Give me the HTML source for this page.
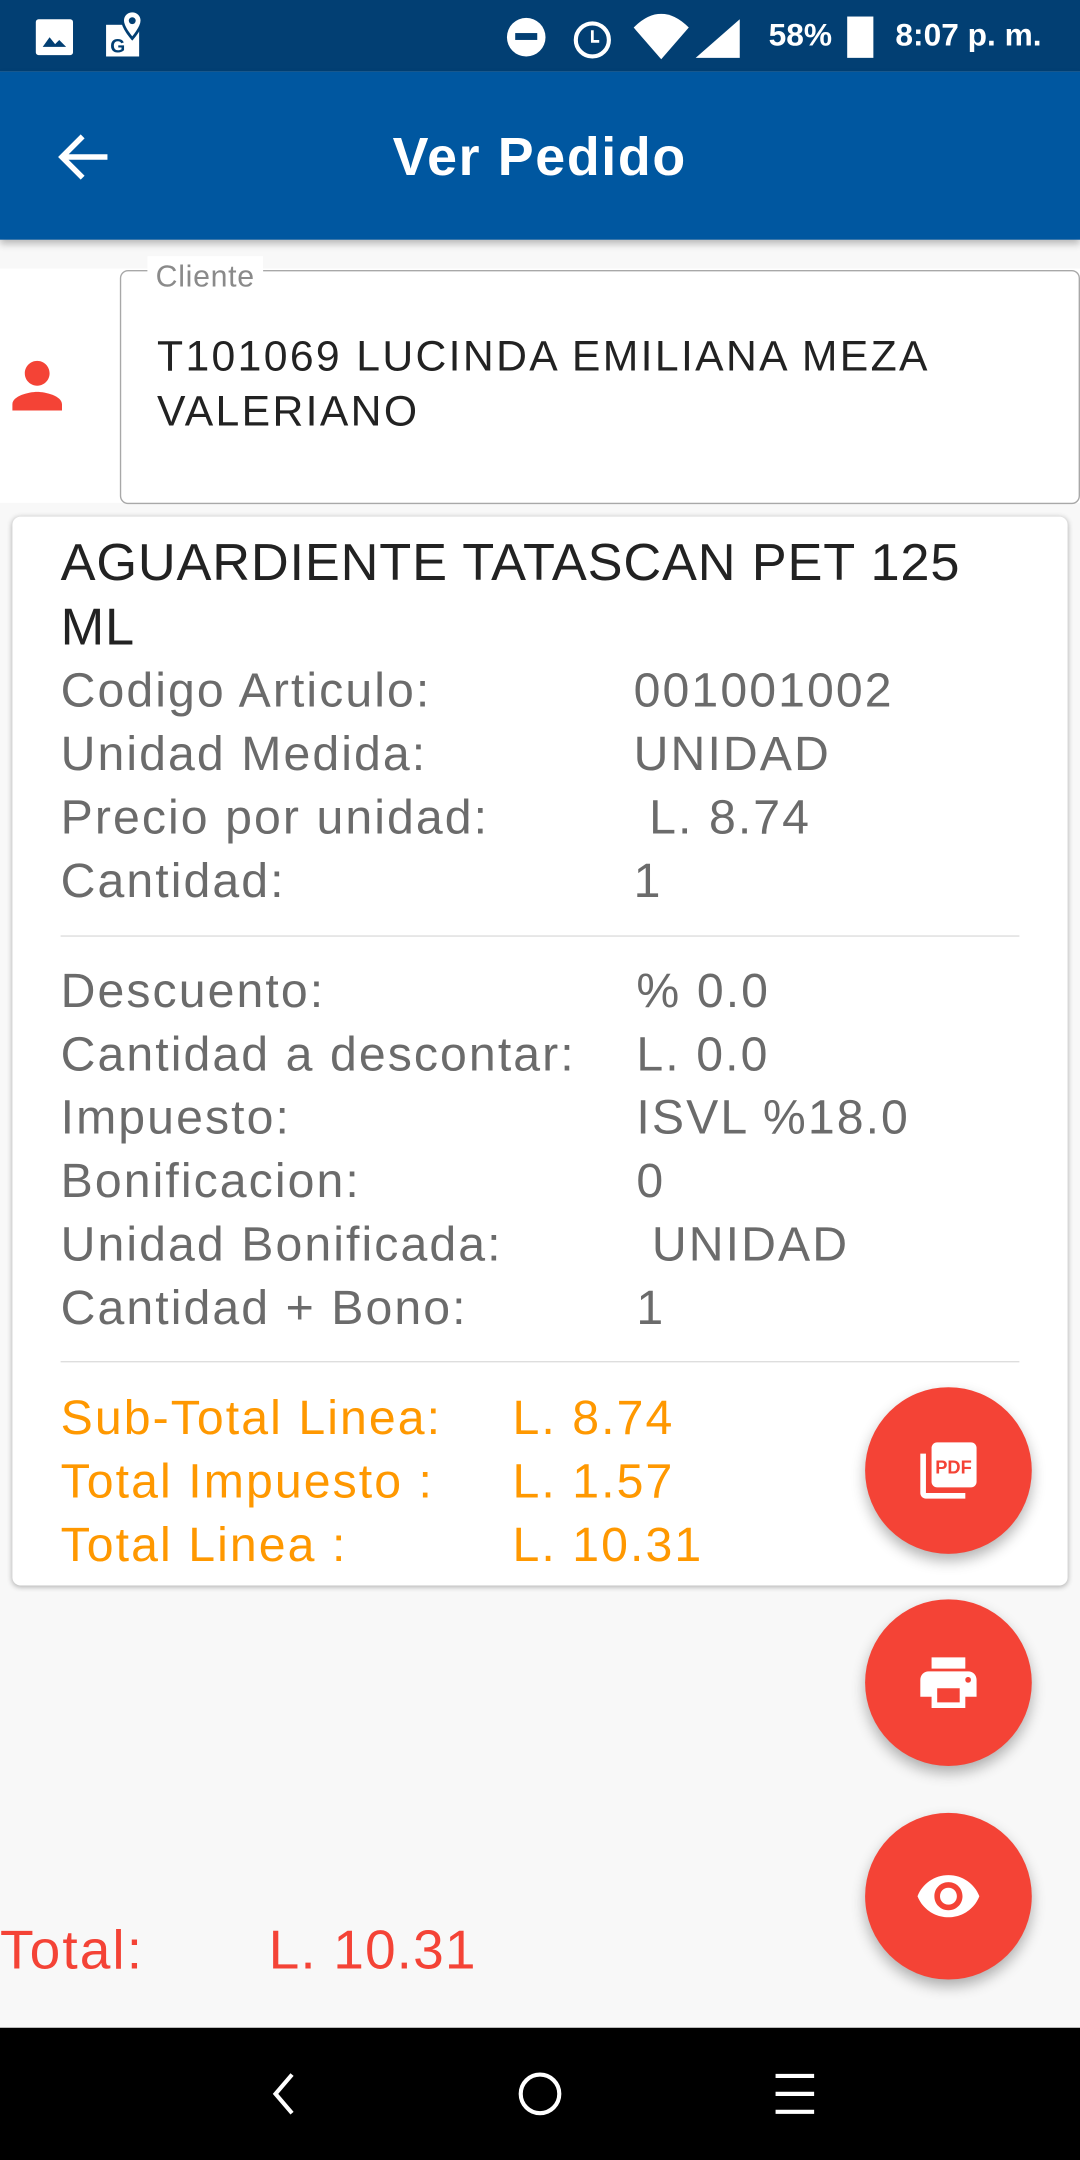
<!DOCTYPE html>
<html><head><meta charset="utf-8"><style>
html,body{margin:0;padding:0;width:1080px;height:2160px;overflow:hidden;background:#f8f8f8}
#s{position:absolute;left:0;top:0;width:784px;height:1568px;transform:scale(1.37755);transform-origin:0 0;font-family:"Liberation Sans",sans-serif;background:#f8f8f8}
.a{position:absolute;white-space:nowrap}
.g{color:#6b6b6b;font-size:35px;line-height:46px;letter-spacing:1.5px}
.o{color:#ff9800;font-size:35px;line-height:46px;letter-spacing:1.5px}
.fab{position:absolute;left:628px;width:121px;height:121px;border-radius:50%;background:#f44336;box-shadow:0 5px 10px rgba(0,0,0,.3)}
.fab svg{position:absolute;left:36px;top:36px}
</style></head><body><div id="s">
<div class="a" style="left:0;top:0;width:784px;height:52px;background:#023f73"></div>
<svg class="a" style="left:25px;top:8px" width="90" height="34" viewBox="0 0 90 34"><rect x="1" y="6" width="27" height="26" rx="2" fill="#fff"/><path d="M6 26l5-7 4 5 3-3 5 5z" fill="#023f73"/><rect x="52" y="10" width="24" height="23" fill="#fff"/><text x="55" y="30" font-size="14" font-weight="bold" fill="#023f73" font-family="Liberation Sans">G</text><path d="M71 0c-4 0-7 3-7 7 0 5 7 13 7 13s7-8 7-13c0-4-3-7-7-7z" fill="#fff" stroke="#023f73" stroke-width="2"/><circle cx="71" cy="7" r="2.5" fill="#023f73"/></svg>
<svg class="a" style="left:365px;top:10px" width="180" height="34" viewBox="0 0 180 34"><circle cx="17" cy="17" r="14" fill="#fff"/><rect x="9" y="14" width="16" height="5" fill="#023f73"/><circle cx="65" cy="19" r="12" fill="none" stroke="#fff" stroke-width="3"/><path d="M65 12v8h5" stroke="#fff" stroke-width="2" fill="none"/><path d="M95 10q20-20 40 0l-20 23z" fill="#fff"/><path d="M140 32l32-28v28z" fill="#fff"/></svg>
<div class="a" style="left:558px;top:12px;color:#fff;font-size:23px;font-weight:bold">58%</div>
<div class="a" style="left:615px;top:12px;width:19px;height:30px;background:#fff"></div>
<div class="a" style="left:650px;top:12px;color:#fff;font-size:23px;font-weight:bold">8:07 p. m.</div>
<div class="a" style="left:0;top:52px;width:784px;height:122px;background:#0057a0;box-shadow:0 3px 5px rgba(0,0,0,.25)"></div>
<svg class="a" style="left:40px;top:95px" width="42" height="38" viewBox="0 0 42 38"><path d="M38 19H6M20 4L5 19l15 15" stroke="#fff" stroke-width="4" fill="none"/></svg>
<div class="a" style="left:285px;top:93px;color:#fff;font-size:39px;font-weight:bold;letter-spacing:1.2px">Ver Pedido</div>
<div class="a" style="left:0;top:195px;width:784px;height:170px;background:#fff"></div>
<svg class="a" style="left:0px;top:253px" width="54" height="54" viewBox="0 0 24 24"><path fill="#f44336" d="M12 12c2.2 0 4-1.8 4-4s-1.8-4-4-4-4 1.8-4 4 1.8 4 4 4zm0 2c-2.7 0-8 1.3-8 4v2h16v-2c0-2.7-5.3-4-8-4z"/></svg>
<div class="a" style="left:87px;top:196px;width:695px;height:168px;border:1px solid #a8a8a8;border-radius:6px"></div>
<div class="a" style="left:107px;top:186px;padding:0 6px;background:#fff;color:#8a8a8a;font-size:22px;line-height:30px;letter-spacing:.5px">Cliente</div>
<div class="a" style="left:114px;top:239px;color:#222;font-size:31px;line-height:40px;letter-spacing:1.7px">T101069 LUCINDA EMILIANA MEZA<br>VALERIANO</div>
<div class="a" style="left:9px;top:375px;width:766px;height:776px;background:#fff;border-radius:6px;box-shadow:0 1px 4px rgba(0,0,0,.3)"></div>
<div class="a" style="left:44px;top:386px;color:#222;font-size:38px;line-height:47px;letter-spacing:.6px">AGUARDIENTE TATASCAN PET 125<br>ML</div>
<div class="a g" style="left:44px;top:479px">Codigo Articulo:<br>Unidad Medida:<br>Precio por unidad:<br>Cantidad:</div>
<div class="a g" style="left:460px;top:479px">001001002<br>UNIDAD<br>&nbsp;L. 8.74<br>1</div>
<div class="a" style="left:44px;top:679px;width:696px;height:1px;background:#ddd"></div>
<div class="a g" style="left:44px;top:697px">Descuento:<br>Cantidad a descontar:<br>Impuesto:<br>Bonificacion:<br>Unidad Bonificada:<br>Cantidad + Bono:</div>
<div class="a g" style="left:462px;top:697px">% 0.0<br>L. 0.0<br>ISVL %18.0<br>0<br>&nbsp;UNIDAD<br>1</div>
<div class="a" style="left:44px;top:988px;width:696px;height:1px;background:#ddd"></div>
<div class="a o" style="left:44px;top:1007px">Sub-Total Linea:<br>Total Impuesto :<br>Total Linea :</div>
<div class="a o" style="left:372px;top:1007px">L. 8.74<br>L. 1.57<br>L. 10.31</div>
<div class="fab" style="top:1007px"><svg width="49" height="49" viewBox="0 0 24 24"><path fill="#fff" d="M2 6h2v14h14v2H4c-1.1 0-2-.9-2-2z"/><rect x="6" y="2" width="16" height="16" rx="2" fill="#fff"/><text x="7.3" y="13" font-size="6.5" font-weight="bold" fill="#f44336" font-family="Liberation Sans">PDF</text></svg></div>
<div class="fab" style="top:1161px"><svg width="49" height="49" viewBox="0 0 24 24"><path fill="#fff" d="M19 8H5c-1.7 0-3 1.3-3 3v6h4v4h12v-4h4v-6c0-1.7-1.3-3-3-3zm-3 11H8v-5h8v5zm3-7c-.6 0-1-.4-1-1s.4-1 1-1 1 .4 1 1-.4 1-1 1zm-1-9H6v4h12z"/></svg></div>
<div class="fab" style="top:1316px"><svg width="49" height="49" viewBox="0 0 24 24"><path fill="#fff" d="M12 4.5C7 4.5 2.7 7.6 1 12c1.7 4.4 6 7.5 11 7.5s9.3-3.1 11-7.5c-1.7-4.4-6-7.5-11-7.5zM12 17c-2.8 0-5-2.2-5-5s2.2-5 5-5 5 2.2 5 5-2.2 5-5 5zm0-8c-1.7 0-3 1.3-3 3s1.3 3 3 3 3-1.3 3-3-1.3-3-3-3z"/></svg></div>
<div class="a" style="left:0;top:1392px;color:#f44336;font-size:40px;line-height:48px;letter-spacing:1.5px">Total:</div>
<div class="a" style="left:195px;top:1392px;color:#f44336;font-size:40px;line-height:48px;letter-spacing:.8px">L. 10.31</div>
<div class="a" style="left:0;top:1472px;width:784px;height:96px;background:#000"></div>
<svg class="a" style="left:180px;top:1495px" width="430" height="50" viewBox="0 0 430 50"><path d="M32 11L20 25l12 14" stroke="#fff" stroke-width="3" fill="none"/><circle cx="212" cy="25" r="14" stroke="#fff" stroke-width="3" fill="none"/><path d="M383 12h28M383 25h28M383 38h28" stroke="#fff" stroke-width="3"/></svg>
</div></body></html>
